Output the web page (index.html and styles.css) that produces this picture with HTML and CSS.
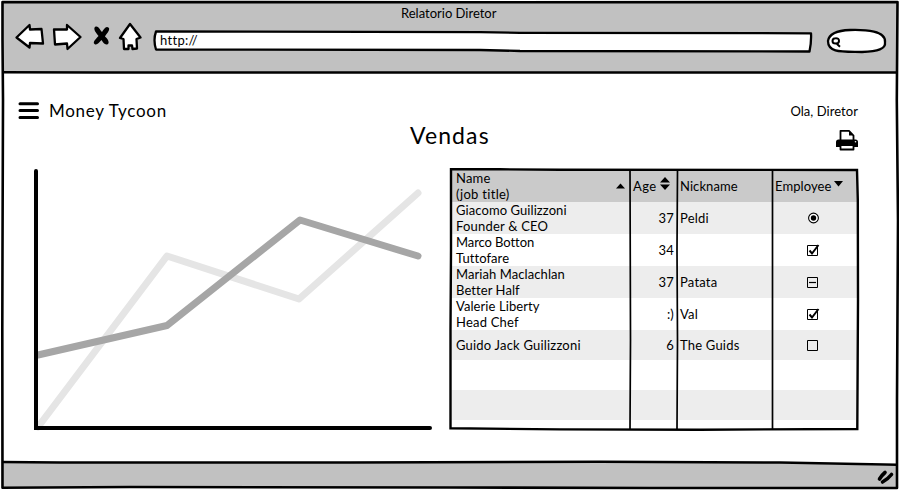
FILE: index.html
```
<!DOCTYPE html>
<html lang="pt">
<head>
<meta charset="utf-8">
<title>Relatorio Diretor</title>
<link rel="stylesheet" href="styles.css">
</head>
<body>
<div class="window">
  <header class="chrome">
    <div class="title">Relatorio Diretor</div>
    <div class="toolbar">
      <svg class="nav" width="128" height="32" viewBox="14 21 128 32">
        <g fill="#fff" stroke="#000" stroke-width="2.300" stroke-linejoin="round">
          <path d="M16.500 37.500L29.500 25L30 29.500L41.500 29L43 43.500L30 43L29.500 47.500Z"/>
          <path d="M54 29.500L67 29.500L67 25L80.500 37L67.500 49L67 43.500L55 44.500Z"/>
          <path d="M130 24L140.500 37.500L136.500 39L137 48.500L132.500 49L132 45.500L128.500 45.500L128.500 49L124 49L123.500 39L120 38Z"/>
        </g>
        <path d="M95 27C98 25 100 30 102 32C104 29 106 25 109 28C110 31 106 34 105 36.500C107 38 110 42 108 44C105 46 103 42 101.500 40C99 42 97 46 94.500 44C92 42 97 38 98.500 36C96 33 93 29 95 27Z"/>
      </svg>
      <div class="address">
        <svg class="outline" width="662" height="24" viewBox="152 29 662 24"><path d="M156 31.500L480 32.200L520 32.800L811 33.300Q811.500 42 809.500 51.500L520 51L480 50L156 49.500Q153 40 156 31.500Z" fill="#fff" stroke="#000" stroke-width="2.300" stroke-linejoin="round"/></svg>
        <span class="url">http://</span>
      </div>
      <svg class="search" width="62" height="28" viewBox="826 27 62 28"><path d="M828 41C829 34 836 30.500 850 30C866 29.500 886 31 885 42C886 49 878 51.500 862 52C842 51.500 828 53 828 41Z" fill="#fff" stroke="#000" stroke-width="2.300"/><path d="M832.500 41Q832.500 38.200 835.500 38.200Q839 38 839 41Q839 43.500 835.500 43.500Q832.500 43.500 832.500 41M837 44L840 46.800" fill="none" stroke="#000" stroke-width="2"/></svg>
    </div>
  </header>
  <main class="page">
    <div class="topline">
      <svg class="menu" width="22" height="18" viewBox="0 0 22 18"><path d="M2 1.700H19.500M2 8.500H19.500M2 15.400H19.500" stroke="#000" stroke-width="3" stroke-linecap="round"/></svg>
      <div class="brand">Money Tycoon</div>
      <div class="user">Ola, Diretor</div>
    </div>
    <div class="headline">
      <h1>Vendas</h1>
      <svg class="printer" width="24" height="22" viewBox="835 129 24 22"><path d="M840.500 141V130.800H849L853.500 135.500V141" fill="#fff" stroke="#000" stroke-width="1.800" stroke-linejoin="round"/><path d="M849 130.800V135.500H853.500Z"/><path d="M838.500 139.500H855.500Q858 139.500 858 142V147H836V142Q836 139.500 838.500 139.500Z"/><path d="M840.500 145H853.500V149.500H840.500Z" fill="#fff" stroke="#000" stroke-width="1.800" stroke-linejoin="round"/><circle cx="855.500" cy="141.800" r="0.800" fill="#fff"/></svg>
    </div>
    <div class="report">
      <svg class="chart" width="400" height="264" viewBox="34 167 400 264">
        <path d="M38 427L167 256L299 299L418 193" fill="none" stroke="#e5e5e5" stroke-width="7" stroke-linecap="round" stroke-linejoin="round"/>
        <path d="M38 355L167 325.500L300 220L418 256" fill="none" stroke="#a6a6a6" stroke-width="7" stroke-linecap="round" stroke-linejoin="round"/>
        <path d="M36 171V428H430" fill="none" stroke="#000" stroke-width="4" stroke-linecap="round"/>
      </svg>
      <div class="grid">
        <div class="row head tall">
          <div class="cell name"><span>Name<br><span class="wide">(job title)</span></span><svg width="9" height="6"><path d="M0 5.500L4.500 0.500L9 5.500Z"/></svg></div>
          <div class="cell age"><span>Age</span><svg width="10" height="14" viewBox="0 0 10 14"><path d="M0 5.500L5 0L10 5.500ZM0 7.500H10L5 13Z"/></svg></div>
          <div class="cell nick tight">Nickname</div>
          <div class="cell emp"><span class="tight">Employee</span><svg width="9" height="6"><path d="M0 0H9L4.500 5.500Z"/></svg></div>
        </div>
        <div class="row tall">
          <div class="cell name"><span class="tight">Giacomo Guilizzoni</span><br>Founder &amp; CEO</div>
          <div class="cell age">37</div><div class="cell nick">Peldi</div>
          <div class="cell mark"><svg width="14" height="14" viewBox="0 0 14 14"><circle cx="7.500" cy="7" r="4.900" fill="#fff" stroke="#000" stroke-width="1.100"/><circle cx="7.500" cy="7" r="2.700"/></svg></div>
        </div>
        <div class="row tall">
          <div class="cell name"><span class="tighter">Marco Botton</span><br><span class="tight">Tuttofare</span></div>
          <div class="cell age">34</div><div class="cell nick"></div>
          <div class="cell mark"><svg width="14" height="14" viewBox="0 0 14 14"><path d="M1.500 2.500H11.500V12.500H1.500Z" fill="#fff" stroke="#000"/><path d="M3.500 7.500L6 10.500L12.500 2" fill="none" stroke="#000" stroke-width="2"/></svg></div>
        </div>
        <div class="row tall">
          <div class="cell name"><span class="tight">Mariah Maclachlan</span><br><span class="tight">Better Half</span></div>
          <div class="cell age">37</div><div class="cell nick">Patata</div>
          <div class="cell mark"><svg width="14" height="14" viewBox="0 0 14 14"><path d="M1.500 2.500H11.500V12.500H1.500Z" fill="none" stroke="#000"/><path d="M3 7.500H10" stroke="#000" stroke-width="1.200"/></svg></div>
        </div>
        <div class="row tall">
          <div class="cell name"><span class="tight">Valerie Liberty</span><br>Head Chef</div>
          <div class="cell age">:)</div><div class="cell nick">Val</div>
          <div class="cell mark"><svg width="14" height="14" viewBox="0 0 14 14"><path d="M1.500 2.500H11.500V12.500H1.500Z" fill="#fff" stroke="#000"/><path d="M3.500 7.500L6 10.500L12.500 2" fill="none" stroke="#000" stroke-width="2"/></svg></div>
        </div>
        <div class="row">
          <div class="cell name">Guido Jack Guilizzoni</div>
          <div class="cell age">6</div><div class="cell nick">The Guids</div>
          <div class="cell mark"><svg width="14" height="14" viewBox="0 0 14 14"><path d="M1.500 2.500H11.500V12.500H1.500Z" fill="none" stroke="#000"/></svg></div>
        </div>
        <div class="row"></div>
        <div class="row"></div>
        <svg class="rules" width="412" height="266" viewBox="448 166 412 266"><g fill="none" stroke="#000"><path d="M451 169.200L500 169.300L560 169.700L857 170L857.800 200L858 300L857.300 429L700 429.700L560 429.400L450.500 428.300L450.500 330L451 250Z" stroke-width="2.400"/><path d="M630 170L630.500 340L630 429M677.500 170L677 250L677.500 340L677 429M772.500 170V429" stroke-width="1.700"/></g></svg>
      </div>
    </div>
  </main>
  <footer class="status"></footer>
  <svg class="frame" width="899" height="490" viewBox="0 0 899 490">
    <path d="M780 461L899 463V466L780 463Z" fill="#fff"/>
    <g fill="none" stroke="#000" stroke-linejoin="round">
      <path d="M2.500 2L450 2.300L897.500 2L896.800 100L898 220L897 400L897 488L650 488L450 487.500L130 487L2.500 487.800L2.300 330L2.500 250L3 100L2.500 40Z" stroke-width="2.600"/>
      <path d="M2 72.300L100 72.600L450 72.500L897 72.500M2 462L60 462.500L350 462.500L600 461.800L780 462.500L897 464.800" stroke-width="2.500"/>
      <path d="M879.500 479Q882 475 885 472.500M882.500 482Q888 479 891.500 474.500" stroke-width="3.600" stroke-linecap="round"/>
    </g>
  </svg>
</div>
</body>
</html>
```
FILE: styles.css
```
* { box-sizing: border-box; }
body { margin: 0; background: #fff; color: #000; font: 13px/16px Lato, "Open Sans", sans-serif; letter-spacing: 0.2px; }
svg { display: block; flex: none; }
.window { position: relative; width: 899px; height: 490px; overflow: hidden; display: flex; flex-direction: column; padding: 1px 1px 2px 2px; }
.chrome { height: 72px; background: #c1c1c1; }
.title { height: 20px; padding: 4px 0 0 399px; letter-spacing: 0; }
.toolbar { display: flex; padding-left: 12px; }
.nav { margin-right: 10px; }
.address { position: relative; width: 662px; height: 24px; margin-top: 8px; padding: 3px 0 0 8px; }
.outline { position: absolute; left: 0; top: 0; }
.url { position: relative; letter-spacing: 0.3px; }
.search { margin: 6px 0 0 12px; }
.page { flex: 1; padding: 27px 0 0 16px; }
.topline { display: flex; height: 22px; }
.menu { margin-top: 2px; }
.brand { width: 300px; margin-left: 9px; padding-top: 1px; font-size: 17px; line-height: 20px; letter-spacing: 0.7px; }
.user { margin-left: auto; margin-right: 40px; padding-top: 3px; letter-spacing: 0.05px; }
.headline { display: flex; height: 44px; padding-left: 392px; }
h1 { margin: -1px 0 0; font-size: 23px; line-height: 28px; font-weight: 400; letter-spacing: 1.1px; }
.printer { margin: 7px 39px 0 auto; }
.report { display: flex; padding-left: 16px; gap: 16px; align-items: flex-start; margin-top: 1px; }
.grid { position: relative; width: 408px; height: 260px; margin-top: 3px; }
.row { display: grid; grid-template-columns: 180px 47px 95px 86px; height: 30px; align-items: center; }
.tall { height: 32px; }
.row:nth-child(even) { background: #ededed; }
.head { background: #cacaca; }
.cell { min-width: 0; white-space: nowrap; }
.name { padding-left: 6px; }
.nick { padding-left: 3px; }
.age { padding-right: 3px; text-align: right; }
.mark { padding-left: 34px; }
.tight { letter-spacing: 0.08px; }
.tighter { letter-spacing: -0.08px; }
.wide { letter-spacing: 0.3px; }
.head .cell { display: flex; align-items: center; }
.head .name { justify-content: space-between; padding-right: 5px; }
.head .age { padding-left: 3px; justify-content: space-between; padding-right: 7px; }
.head .age span { letter-spacing: 0.4px; }
.head .age svg { margin-top: -5px; }
.head .emp { padding-left: 3px; gap: 3px; }
.head .emp svg { margin-top: -5px; }
.rules { position: absolute; left: -2px; top: -4px; }
.status { height: 25px; background: #c1c1c1; }
.frame { position: absolute; left: 0; top: 0; pointer-events: none; }
```
